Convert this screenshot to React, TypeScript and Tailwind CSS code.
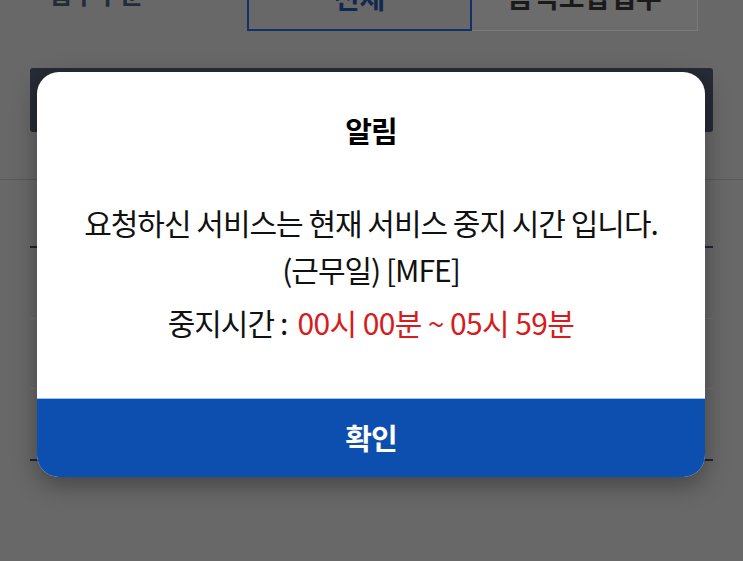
import React from "react";

export default function App() {
  const font = { fontFamily: '"Noto Sans CJK KR", "Noto Sans", sans-serif' };
  return (
    <div className="relative w-[743px] h-[561px] overflow-hidden bg-[#686868]" style={font}>
      {/* underlying page (dimmed) */}
      <div className="flex flex-col -mt-[31px]">
        <div className="flex h-[62px] pl-[30px]">
          <div className="w-[217px] flex items-end pb-[25px] pl-[18px] text-[26px] font-bold text-[#262c36] leading-none">
            접수구분
          </div>
          <div className="w-[225px] border-2 border-[#12306a] flex items-start justify-center pt-[12px] text-[28px] font-bold text-[#13284f] leading-none">
            전체
          </div>
          <div className="w-[226px] border border-[#7a7a7a] border-l-0 bg-[#6c6c6c] flex items-start justify-center pt-[12px] text-[28px] font-bold text-[#1a1a1a] leading-none">
            음식조합업무
          </div>
        </div>
        <div className="mx-[30px] mt-[37px] h-[64px] rounded-[3px] bg-[#272b35]" />
        <div className="mt-[47px] h-px bg-[#5a5a5a]" />
        <div className="mx-[30px] mt-[66px] h-[2px] bg-[#1e2535]" />
        <div className="mx-[30px] mt-[70px] h-px bg-[#727272]" />
        <div className="mx-[30px] mt-[69px] h-px bg-[#727272]" />
        <div className="mx-[30px] mt-[70px] h-[2px] bg-[#1e2535]" />
      </div>

      {/* modal */}
      <div className="absolute left-[37px] top-[72px] w-[668px] h-[405px] rounded-[22px] overflow-hidden bg-white flex flex-col shadow-[0_8px_24px_rgba(0,0,0,0.35)]">
        <div className="flex-1 flex flex-col items-center">
          <div className="mt-[40px] h-[36px] leading-[36px] text-[29px] font-bold text-black tracking-[-1px]">
            알림
          </div>
          <div className="mt-[51px] h-[47px] leading-[47px] text-[30px] text-[#111] tracking-[-1px] whitespace-nowrap">
            요청하신 서비스는 현재 서비스 중지 시간 입니다.
          </div>
          <div className="h-[47px] leading-[47px] text-[30px] text-[#111] tracking-[-1px] whitespace-nowrap">
            (근무일) [MFE]
          </div>
          <div className="mt-[6px] h-[47px] leading-[47px] text-[30px] text-[#111] tracking-[-1px] whitespace-nowrap flex">
            <span>중지시간</span>
            <span className="ml-[6px] mr-[10px]">:</span>
            <span className="text-[#d61c1c] tracking-[-0.6px]">00시 00분 ~ 05시 59분</span>
          </div>
        </div>
        <div className="h-[79px] bg-[#0d4fae] border-t border-[#9cc3ea] flex items-center justify-center text-[29px] font-bold text-white tracking-[-1px]">
          확인
        </div>
      </div>
    </div>
  );
}
